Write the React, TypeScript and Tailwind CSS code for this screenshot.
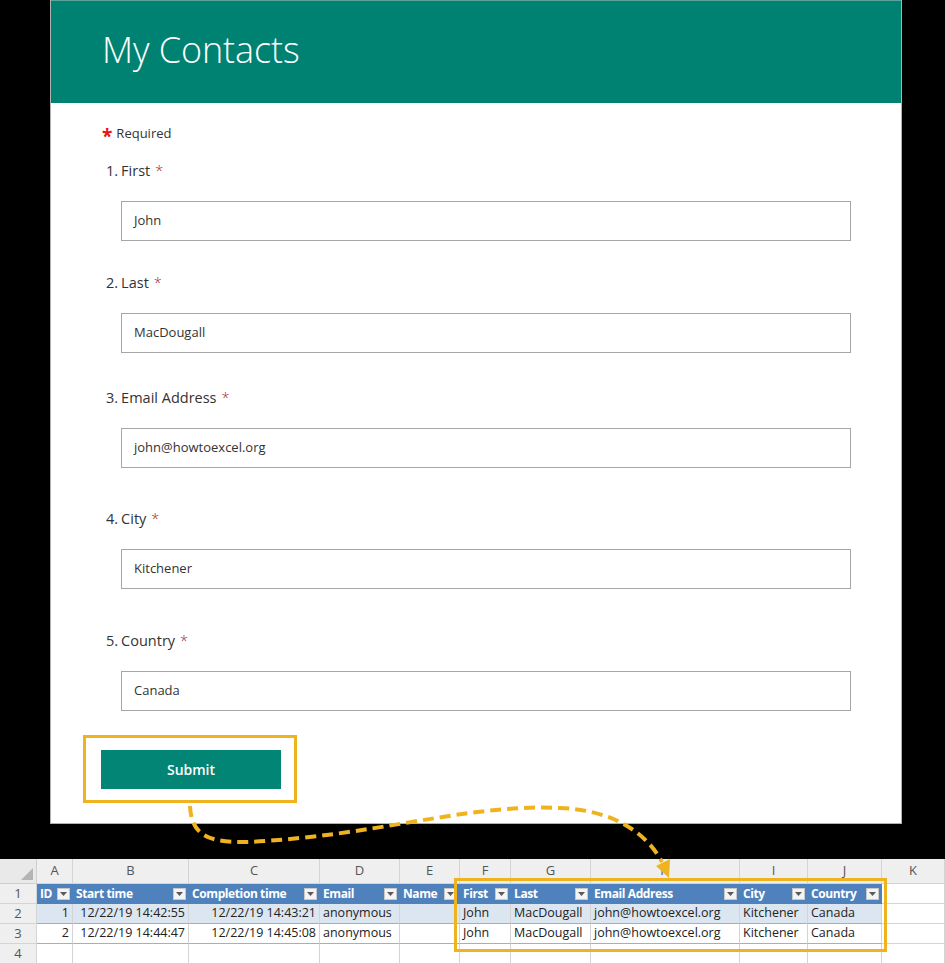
import React from "react";

const FORM_FONT = { fontFamily: '"Open Sans", "Noto Sans", sans-serif' };
const XL_FONT = { fontFamily: '"Open Sans", "Noto Sans", sans-serif' };

const questions = [
  { n: "1.", label: "First", value: "John", mt: "mt-[16px]" },
  { n: "2.", label: "Last", value: "MacDougall", mt: "mt-[30px]" },
  { n: "3.", label: "Email Address", value: "john@howtoexcel.org", mt: "mt-[33px]" },
  { n: "4.", label: "City", value: "Kitchener", mt: "mt-[39px]" },
  { n: "5.", label: "Country", value: "Canada", mt: "mt-[40px]" },
];

const letters = ["A", "B", "C", "D", "E", "F", "G", "H", "I", "J", "K"];
const headers = ["ID", "Start time", "Completion time", "Email", "Name", "First", "Last", "Email Address", "City", "Country"];
const rows = [
  ["1", "12/22/19 14:42:55", "12/22/19 14:43:21", "anonymous", "", "John", "MacDougall", "john@howtoexcel.org", "Kitchener", "Canada"],
  ["2", "12/22/19 14:44:47", "12/22/19 14:45:08", "anonymous", "", "John", "MacDougall", "john@howtoexcel.org", "Kitchener", "Canada"],
];
const rightAligned = [true, true, true, false, false, false, false, false, false, false];

function DropDown() {
  return (
    <span className="ml-auto mr-[3px] flex h-[12px] w-[13px] shrink-0 items-center justify-center bg-[#f4f4f4] border border-[#c8c8c8]">
      <svg width="7" height="4" viewBox="0 0 7 4">
        <polygon points="0,0 7,0 3.5,4" fill="#5a5a5a" />
      </svg>
    </span>
  );
}

export default function App() {
  return (
    <div className="relative w-[945px] h-[963px] overflow-hidden bg-black">
      {/* Form panel */}
      <div className="ml-[50px] w-[852px] h-[824px] bg-white border-x border-b border-[#b0b0b0]" style={FORM_FONT}>
        <div className="h-[103px] bg-[#008272] border-t border-[#5aa59b] pl-[51px] pt-[25px]">
          <h1 className="text-[36px] leading-[48px] font-light text-white tracking-[-0.1px]">My Contacts</h1>
        </div>
        <div className="pl-[51px] pt-[22px]">
          <div className="flex items-center h-[18px] text-[13px] text-[#333]">
            <span className="text-[#e81123] text-[19px] font-bold mr-[4px] leading-none pt-[5px]">*</span>
            <span>Required</span>
          </div>
          {questions.map((q) => (
            <div key={q.n} className={q.mt}>
              <div className="pl-[4px] h-[24px] flex items-center text-[14.5px] text-[#333]">
                <span>{q.n}</span>
                <span className="ml-[3px]">{q.label}</span>
                <span className="ml-[5px] text-[#a4262c] font-light">*</span>
              </div>
              <div className="mt-[18px] ml-[19px] w-[730px] h-[40px] border border-[#a6a6a6] flex items-center pl-[12px] text-[13px] text-[#333]">
                {q.value}
              </div>
            </div>
          ))}
          <div className="mt-[24px] ml-[-19px] w-[214px] h-[68px] border-[3px] border-[#efb320] pt-[12px] pl-[15px]">
            <div className="w-[180px] h-[39px] bg-[#038575] flex items-center justify-center text-white text-[14px] font-semibold">
              Submit
            </div>
          </div>
        </div>
      </div>

      {/* Excel grid */}
      <div
        className="mt-[35px] grid grid-cols-[37px_36px_116px_131px_80px_60px_51px_80px_149px_68px_74px_63px] grid-rows-[25px_20px_20px_20px_20px] bg-white text-[12.5px] text-[#222]"
        style={XL_FONT}
      >
        {/* column header row */}
        <div className="bg-[#e9e9e9] border-r border-b border-[#cfcfcf] flex items-end justify-end p-[3px]">
          <svg width="12" height="12" viewBox="0 0 12 12">
            <polygon points="12,0 12,12 0,12" fill="#b4b4b4" />
          </svg>
        </div>
        {letters.map((l) => (
          <div key={l} className="bg-[#efefef] border-r border-b border-[#d4d4d4] flex items-center justify-center text-[13px] text-[#555]">
            {l}
          </div>
        ))}

        {/* row 1: table header */}
        <div className="bg-[#efefef] border-r border-b border-[#d4d4d4] flex items-center justify-center text-[13px] text-[#555]">1</div>
        {headers.map((h) => (
          <div key={h} className="bg-[#4f81bd] flex items-center pl-[3px] text-white font-bold text-[12px] tracking-[-0.4px] whitespace-nowrap overflow-hidden">
            <span>{h}</span>
            <DropDown />
          </div>
        ))}
        <div className="bg-white border-r border-b border-[#d4d4d4]" />

        {/* data rows */}
        {rows.map((r, ri) => (
          <React.Fragment key={ri}>
            <div className="bg-[#efefef] border-r border-b border-[#d4d4d4] flex items-center justify-center text-[13px] text-[#555]">
              {ri + 2}
            </div>
            {r.map((v, ci) => (
              <div
                key={ci}
                className={
                  (ri === 0 ? "bg-[#dce6f1] " : "bg-white ") +
                  "border-r border-r-[#d4d4d4] border-b border-b-[#95b3d7] flex items-center whitespace-nowrap overflow-visible " +
                  (rightAligned[ci] ? "justify-end pr-[3px]" : "pl-[3px]")
                }
              >
                {v}
              </div>
            ))}
            <div className="bg-white border-r border-b border-[#d4d4d4]" />
          </React.Fragment>
        ))}

        {/* row 4 */}
        <div className="bg-[#efefef] border-r border-[#d4d4d4] flex items-center justify-center text-[13px] text-[#555]">4</div>
        {letters.map((l) => (
          <div key={"r4" + l} className="bg-white border-r border-[#d4d4d4]" />
        ))}
      </div>

      {/* Orange highlight over the spreadsheet */}
      <div className="absolute left-[454px] top-[878px] w-[433px] h-[74px] border-[3px] border-[#efb320] pointer-events-none" />

      {/* Dashed connector arrow */}
      <svg className="absolute left-0 top-0 pointer-events-none" width="945" height="963" viewBox="0 0 945 963">
        <path
          d="M190 806 C192 845, 220 846, 300 838 C400 828, 480 804, 560 808 C612 810, 646 832, 662 862"
          fill="none"
          stroke="#efb320"
          strokeWidth="4"
          strokeDasharray="11 6"
        />
        <polygon points="669,878 656,866 670,859" fill="#efb320" />
      </svg>
    </div>
  );
}
